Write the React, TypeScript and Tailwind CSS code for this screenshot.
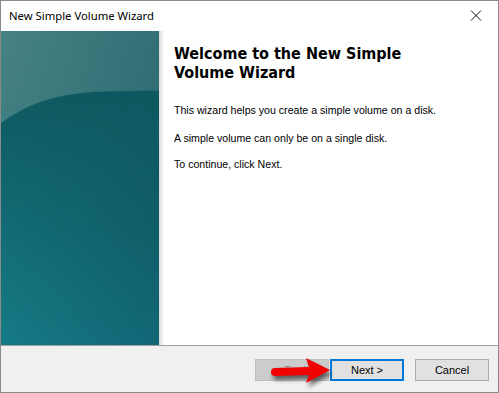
import React from "react";

export default function App() {
  return (
    <div className="w-[499px] h-[393px] bg-[#1e2a4a] overflow-hidden">
      <div className="relative w-[499px] h-[393px] flex flex-col border border-[#8a8a8a] bg-white">
        {/* Title bar */}
        <div className="h-[30px] flex items-center justify-between bg-white shrink-0">
          <span
            className="pl-[8px] text-[11.3px] text-black"
            style={{ fontFamily: '"Noto Sans", "Open Sans", sans-serif' }}
          >
            New Simple Volume Wizard
          </span>
          <svg width="46" height="30" viewBox="0 0 46 30" className="mr-[-1px]">
            <path d="M18 9.5 L28 19.5 M28 9.5 L18 19.5" stroke="#111" strokeWidth="1" />
          </svg>
        </div>

        {/* Main */}
        <div className="flex h-[314px] shrink-0">
          <div className="w-[158px] h-full shrink-0">
            <svg width="158" height="314" viewBox="0 0 158 314">
              <defs>
                <linearGradient id="top" x1="0" y1="0" x2="1" y2="0.6">
                  <stop offset="0" stopColor="#468283" />
                  <stop offset="1" stopColor="#2b6a72" />
                </linearGradient>
                <linearGradient id="bottom" x1="0" y1="0" x2="0" y2="1">
                  <stop offset="0" stopColor="#0e5960" />
                  <stop offset="0.5" stopColor="#105d68" />
                  <stop offset="1" stopColor="#136776" />
                </linearGradient>
                <linearGradient id="cy" x1="0" y1="0" x2="1" y2="0">
                  <stop offset="0" stopColor="#17838a" stopOpacity="1" />
                  <stop offset="1" stopColor="#17838a" stopOpacity="0" />
                </linearGradient>
                <linearGradient id="mv" x1="0" y1="0" x2="0" y2="1">
                  <stop offset="0" stopColor="#fff" stopOpacity="0" />
                  <stop offset="1" stopColor="#fff" stopOpacity="0.7" />
                </linearGradient>
                <mask id="m">
                  <rect x="0" y="60" width="158" height="254" fill="url(#mv)" />
                </mask>
              </defs>
              <rect width="158" height="314" fill="url(#top)" />
              <path d="M0 92 C 30 70, 60 61, 110 60 L158 59 L158 314 L0 314 Z" fill="url(#bottom)" />
              <rect x="0" y="60" width="158" height="254" fill="url(#cy)" mask="url(#m)" />
              <path d="M0 92 C 30 70, 60 61, 110 60 L158 59" fill="none" stroke="#3a7a7d" strokeWidth="1" opacity="0.5" />
            </svg>
          </div>
          <div className="w-[5px] h-full shrink-0 bg-gradient-to-r from-[#d8d8d8] to-white" />
          <div className="flex-1 pl-[10px] pt-[13px]">
            <h1
              className="text-[16px] font-bold leading-[19px] text-black"
              style={{ fontFamily: '"DejaVu Sans Condensed", "DejaVu Sans", Verdana, sans-serif' }}
            >
              Welcome to the New Simple
              <br />
              Volume Wizard
            </h1>
            <div
              className="text-[10.6px] text-black leading-[13px]"
              style={{ fontFamily: '"Liberation Sans", Arial, sans-serif' }}
            >
              <p className="mt-[22px]">This wizard helps you create a simple volume on a disk.</p>
              <p className="mt-[15px]">A simple volume can only be on a single disk.</p>
              <p className="mt-[13px]">To continue, click Next.</p>
            </div>
          </div>
        </div>

        {/* Separator */}
        <div className="h-px bg-[#a0a0a0] shrink-0" />

        {/* Bottom bar */}
        <div
          className="flex-1 bg-[#f0f0f0] flex justify-end items-start pt-[13px] pr-[9px] text-[11px]"
          style={{ fontFamily: '"Liberation Sans", Arial, sans-serif' }}
        >
          <button className="w-[74px] h-[22px] bg-[#cccccc] border border-[#bfbfbf] text-[#838383]">
            &lt; Back
          </button>
          <button className="w-[74px] h-[22px] ml-[1px] bg-[#e1e1e1] border-2 border-[#0078d7] text-black">
            Next &gt;
          </button>
          <button className="w-[74px] h-[22px] ml-[11px] bg-[#e1e1e1] border border-[#adadad] text-black">
            Cancel
          </button>
        </div>

        {/* Red arrow overlay */}
        <svg
          className="absolute left-[262px] top-[352px]"
          width="76"
          height="38"
          viewBox="0 0 76 38"
        >
          <defs>
            <filter id="sh" x="-20%" y="-30%" width="140%" height="180%">
              <feGaussianBlur stdDeviation="2" />
            </filter>
          </defs>
          <g transform="translate(2,4)" filter="url(#sh)" opacity="0.55">
            <path d="M12 15 L46 14 L43 5 L67 17 L43 30 L46 22 L12 23 A4 4 0 0 1 12 15 Z" fill="#000" />
          </g>
          <path d="M12 15 L46 14 L43 5 L67 17 L43 30 L46 22 L12 23 A4 4 0 0 1 12 15 Z" fill="#f20000" />
        </svg>
      </div>
    </div>
  );
}
